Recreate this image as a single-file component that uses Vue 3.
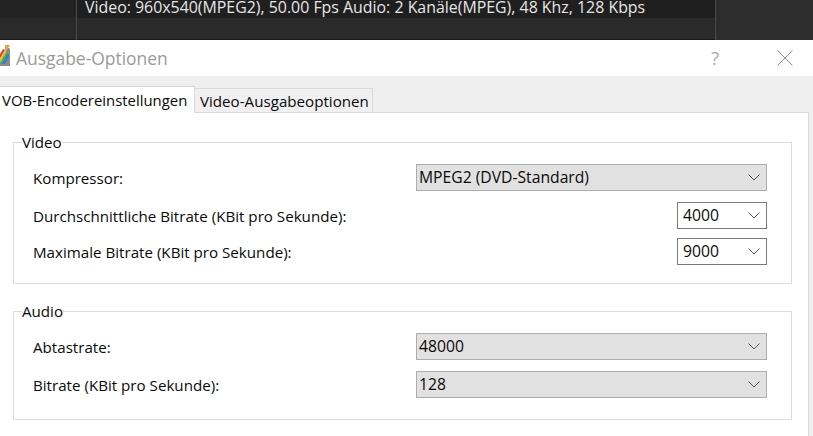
<script setup>
const videoRows = [
  { label: 'Kompressor:', value: 'MPEG2 (DVD-Standard)', wide: true },
  { label: 'Durchschnittliche Bitrate (KBit pro Sekunde):', value: '4000', wide: false },
  { label: 'Maximale Bitrate (KBit pro Sekunde):', value: '9000', wide: false }
]
const audioRows = [
  { label: 'Abtastrate:', value: '48000', wide: true },
  { label: 'Bitrate (KBit pro Sekunde):', value: '128', wide: true }
]
const groups = [
  { title: 'Video', rows: videoRows, cls: 'video' },
  { title: 'Audio', rows: audioRows, cls: 'audio' }
]
</script>

<template>
  <div class="page">
    <header class="player">
      <div class="cell first"></div>
      <div class="cell info"><span>Video: 960x540(MPEG2), 50.00 Fps Audio: 2 Kanäle(MPEG), 48 Khz, 128 Kbps</span></div>
      <div class="cell last"></div>
    </header>
    <div class="titlebar">
      <svg class="logo" width="14" height="24" viewBox="0 0 14 24">
        <path d="M0 22 L0 18 L9 3 L12 5 L12 22 Z" fill="#8a8a8a" />
        <path d="M-2 17 L5 5 L7 6 L0 18 Z" fill="#e23c3c" />
        <path d="M0 18 L7 6 L9 7 L2 19 Z" fill="#f0c030" />
        <path d="M2 19 L9 7 L10 9 L4 20 Z" fill="#3fb650" />
        <path d="M4 20 L10 9 L11 12 L7 20 Z" fill="#3c78d8" />
        <path d="M7 1 L12 1 L9 6 L7 5 Z" fill="#e9a33a" />
      </svg>
      <span class="title">Ausgabe-Optionen</span>
      <span class="help">?</span>
      <svg class="close" width="16" height="16" viewBox="0 0 16 16">
        <path d="M0.5 0.5 L15.5 15.5 M15.5 0.5 L0.5 15.5" stroke="#8f8f8f" stroke-width="1" fill="none" />
      </svg>
    </div>
    <div class="body">
      <nav class="tabs">
        <div class="tab active">VOB-Encodereinstellungen</div>
        <div class="tab">Video-Ausgabeoptionen</div>
      </nav>
      <main class="panel">
        <fieldset v-for="g in groups" :key="g.title" class="group" :class="g.cls">
          <legend>{{ g.title }}</legend>
          <div v-for="r in g.rows" :key="r.label" class="row">
            <label>{{ r.label }}</label>
            <div class="combo" :class="r.wide ? 'wide' : 'small'">
              <span>{{ r.value }}</span>
              <svg width="12" height="7" viewBox="0 0 12 7">
                <path d="M0.5 0.5 L6 6 L11.5 0.5" stroke="#555" stroke-width="1" fill="none" />
              </svg>
            </div>
          </div>
        </fieldset>
      </main>
    </div>
  </div>
</template>

<style>
html, body { margin: 0; padding: 0; background: #fff; overflow: hidden; }
</style>

<style scoped>
.page {
  width: 813px;
  height: 436px;
  overflow: hidden;
  display: flex;
  flex-direction: column;
  font-family: "Open Sans", "Noto Sans", sans-serif;
  font-size: 15.15px;
  color: #0a0a0a;
}
.player {
  height: 40px;
  display: flex;
  background: linear-gradient(#232323 0 18px, #2a2a2a 18px 39px, #1a1a1a 39px);
  color: #e6e6e6;
  font-size: 15.9px;
}
.cell { height: 100%; box-sizing: border-box; }
.first { width: 77px; border-right: 1px solid #4a4a4a; }
.info { width: 639px; padding-left: 8px; line-height: 14px; border-right: 1px solid #4a4a4a; background: linear-gradient(#1f1f1f 0 18px, transparent 18px); }
.last { flex: 1; background: #2d2d2d; }
.titlebar {
  height: 36px;
  background: #fff;
  display: flex;
  align-items: center;
}
.logo { margin: 0 4px 4px -2px; flex: none; }
.title { font-size: 17.45px; color: #9b9b9b; }
.help { margin-left: auto; margin-right: 58px; font-size: 18px; color: #a8a8a8; }
.close { margin-right: 20px; }
.body { flex: 1; background: #efefef; display: flex; flex-direction: column; padding-top: 10px; min-height: 0; }
.tabs { display: flex; align-items: flex-end; height: 26px; position: relative; z-index: 1; }
.tab {
  height: 24px;
  line-height: 25px;
  box-sizing: border-box;
  padding: 0 3px 0 5px;
  background: #f0f0f0;
  border: 1px solid #d9d9d9;
  border-bottom: none;
  border-left: none;
}
.tab.active {
  height: 27px;
  margin-bottom: -1px;
  width: 195px;
  padding-left: 2px;
  background: #fff;
  line-height: 26px;
  font-size: 14.9px;
}
.panel {
  flex: 1;
  margin-right: 4px;
  background: #fff;
  border: 1px solid #d9d9d9;
  border-left: none;
  border-bottom: none;
  padding: 19px 16px 0 13px;
  display: flex;
  flex-direction: column;
  gap: 17px;
}
.group {
  box-sizing: border-box;
  margin: 0;
  padding: 0 24px 0 19px;
  border: 1px solid #dcdcdc;
  min-inline-size: 0;
  display: grid;
  grid-template-columns: 1fr;
}
legend { padding: 0; margin-left: -11px; line-height: 20px; }
.video { height: 152px; padding-top: 12px; grid-template-rows: 38px 36px 27px; align-content: start; }
.audio { height: 119px; padding-top: 12px; grid-template-rows: 38px 27px; align-content: start; }
.row { display: flex; justify-content: space-between; align-items: flex-start; }
.row label { line-height: 28px; }
.combo {
  box-sizing: border-box;
  height: 27px;
  display: flex;
  align-items: center;
  justify-content: space-between;
  padding: 0 6px 0 2px;
  font-size: 15.7px;
}
.combo span { line-height: 22px; margin-bottom: 1px; }
.wide { width: 351px; background: #e1e1e1; border: 1px solid #adadad; }
.small { width: 90px; background: #fff; border: 1px solid #7a7a7a; padding-left: 5px; }
</style>
